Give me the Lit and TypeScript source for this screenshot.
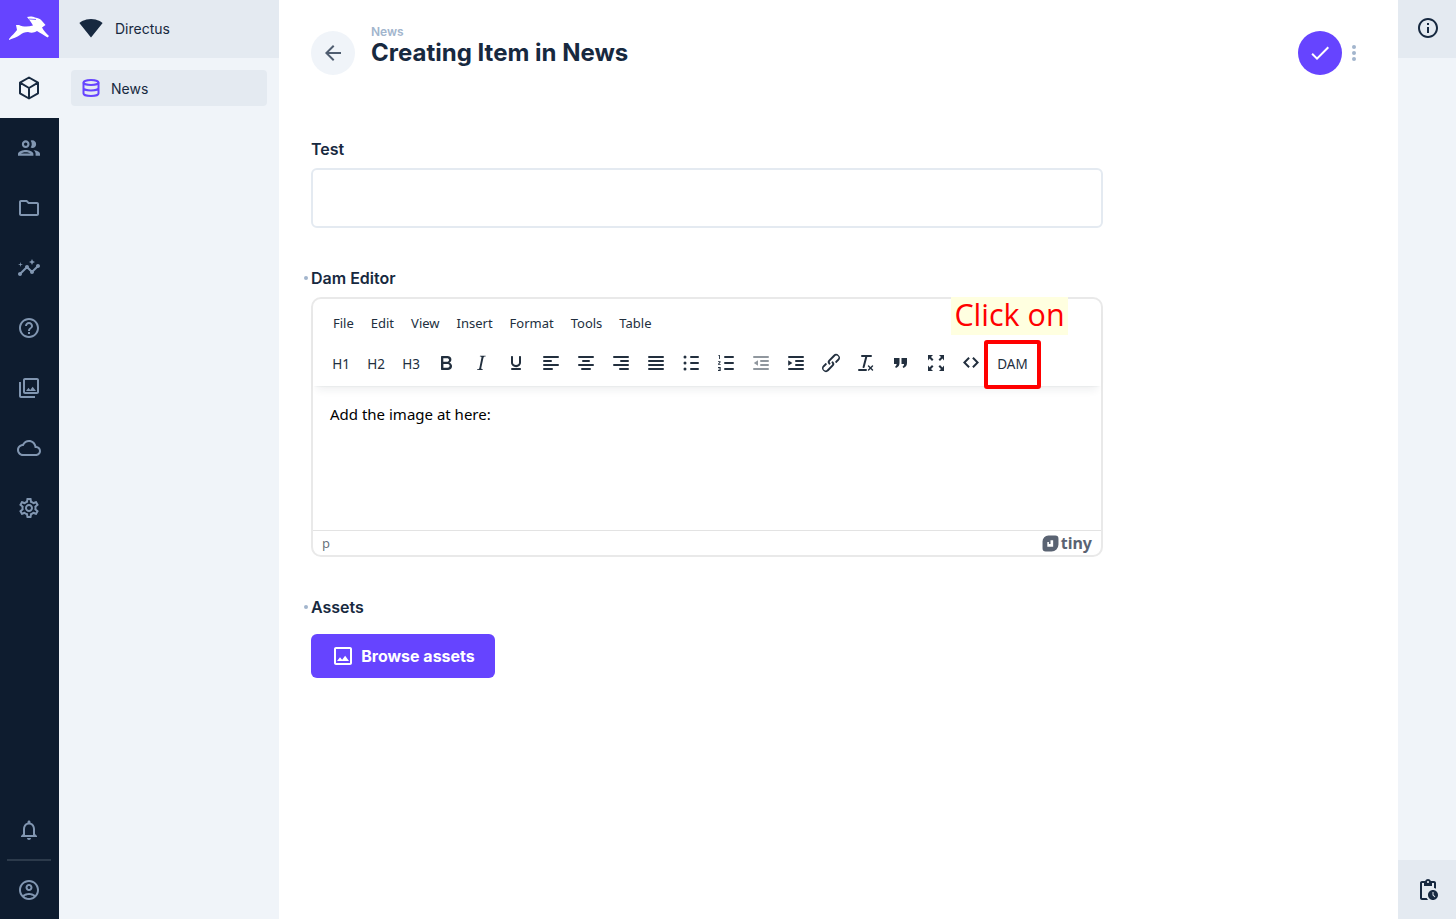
import { LitElement, html, css, svg, TemplateResult } from 'lit';
import { customElement } from 'lit/decorators.js';

const icon = (d: string, size = 24, cls = '') => html`<svg class=${cls} width=${size} height=${size} viewBox="0 0 24 24" fill="currentColor"><path d=${d}></path></svg>`;

const ICONS = {
  group: 'M9 13.75c-2.34 0-7 1.17-7 3.5V19h14v-1.75c0-2.33-4.66-3.5-7-3.5zM4.34 17c.84-.58 2.87-1.25 4.66-1.25s3.82.67 4.66 1.25H4.34zM9 12c1.93 0 3.5-1.57 3.5-3.5S10.93 5 9 5 5.5 6.57 5.5 8.5 7.07 12 9 12zm0-5c.83 0 1.5.67 1.5 1.5S9.83 10 9 10s-1.5-.67-1.5-1.5S8.17 7 9 7zm7.04 6.81c1.16.84 1.96 1.96 1.96 3.44V19h4v-1.75c0-2.02-3.5-3.17-5.96-3.44zM15 12c1.93 0 3.5-1.57 3.5-3.5S16.93 5 15 5c-.54 0-1.04.13-1.5.35.63.89 1 1.98 1 3.15s-.37 2.26-1 3.15c.46.22.96.35 1.5.35z',
  folder: 'M20 6h-8l-2-2H4c-1.1 0-1.99.9-1.99 2L2 18c0 1.1.9 2 2 2h16c1.1 0 2-.9 2-2V8c0-1.1-.9-2-2-2zm0 12H4V6h5.17l2 2H20v10z',
  insights: 'M21 8c-1.45 0-2.26 1.44-1.93 2.51l-3.55 3.56c-.3-.09-.74-.09-1.04 0l-2.55-2.55C12.27 10.45 11.46 9 10 9c-1.45 0-2.27 1.44-1.93 2.52l-4.56 4.55C2.44 15.74 1 16.55 1 18c0 1.1.9 2 2 2 1.45 0 2.26-1.44 1.93-2.51l4.55-4.56c.3.09.74.09 1.04 0l2.55 2.55C12.73 16.55 13.54 18 15 18c1.45 0 2.27-1.44 1.93-2.52l3.56-3.55c1.07.33 2.51-.48 2.51-1.93 0-1.1-.9-2-2-2zM15 9l.94-2.07L18 6l-2.06-.93L15 3l-.92 2.07L12 6l2.08.93zM3.5 11L4 9l2-.5L4 8l-.5-2L3 8l-2 .5L3 9z',
  help: 'M11 18h2v-2h-2v2zm1-16C6.48 2 2 6.48 2 12s4.48 10 10 10 10-4.48 10-10S17.52 2 12 2zm0 18c-4.41 0-8-3.59-8-8s3.59-8 8-8 8 3.59 8 8-3.59 8-8 8zm0-14c-2.21 0-4 1.79-4 4h2c0-1.1.9-2 2-2s2 .9 2 2c0 2-3 1.75-3 5h2c0-2.25 3-2.5 3-5 0-2.21-1.79-4-4-4z',
  photos: 'M20 4v12H8V4h12m0-2H8c-1.1 0-2 .9-2 2v12c0 1.1.9 2 2 2h12c1.1 0 2-.9 2-2V4c0-1.1-.9-2-2-2zm-8.5 9.67l1.69 2.26 2.48-3.1L19 15H9zM2 6v14c0 1.1.9 2 2 2h14v-2H4V6H2z',
  cloud: 'M19.35 10.04C18.67 6.59 15.64 4 12 4 9.11 4 6.6 5.64 5.35 8.04 2.34 8.36 0 10.91 0 14c0 3.31 2.69 6 6 6h13c2.76 0 5-2.24 5-5 0-2.64-2.05-4.78-4.65-4.96zM19 18H6c-2.21 0-4-1.79-4-4 0-2.05 1.53-3.76 3.56-3.97l1.07-.11.5-.95C8.08 7.14 9.94 6 12 6c2.62 0 4.88 1.86 5.39 4.43l.3 1.5 1.53.11c1.56.1 2.78 1.41 2.78 2.96 0 1.65-1.35 3-3 3z',
  settings: 'M19.43 12.98c.04-.32.07-.64.07-.98 0-.34-.03-.66-.07-.98l2.11-1.65c.19-.15.24-.42.12-.64l-2-3.46c-.09-.16-.26-.25-.44-.25-.06 0-.12.01-.17.03l-2.49 1c-.52-.4-1.08-.73-1.69-.98l-.38-2.65C14.46 2.18 14.25 2 14 2h-4c-.25 0-.46.18-.49.42l-.38 2.65c-.61.25-1.17.59-1.69.98l-2.49-1c-.06-.02-.12-.03-.18-.03-.17 0-.34.09-.43.25l-2 3.46c-.13.22-.07.49.12.64l2.11 1.65c-.04.32-.07.65-.07.98 0 .33.03.66.07.98l-2.11 1.65c-.19.15-.24.42-.12.64l2 3.46c.09.16.26.25.44.25.06 0 .12-.01.17-.03l2.49-1c.52.4 1.08.73 1.69.98l.38 2.65c.03.24.24.42.49.42h4c.25 0 .46-.18.49-.42l.38-2.65c.61-.25 1.17-.59 1.69-.98l2.49 1c.06.02.12.03.18.03.17 0 .34-.09.43-.25l2-3.46c.12-.22.07-.49-.12-.64l-2.11-1.65zm-1.98-1.71c.04.31.05.52.05.73 0 .21-.02.43-.05.73l-.14 1.13.89.7 1.08.84-.7 1.21-1.27-.51-1.04-.42-.9.68c-.43.32-.84.56-1.25.73l-1.06.43-.16 1.13-.2 1.35h-1.4l-.19-1.35-.16-1.13-1.06-.43c-.43-.18-.83-.41-1.23-.71l-.91-.7-1.06.43-1.27.51-.7-1.21 1.08-.84.89-.7-.14-1.13c-.03-.31-.05-.54-.05-.74s.02-.43.05-.73l.14-1.13-.89-.7-1.08-.84.7-1.21 1.27.51 1.04.42.9-.68c.43-.32.84-.56 1.25-.73l1.06-.43.16-1.13.2-1.35h1.39l.19 1.35.16 1.13 1.06.43c.43.18.83.41 1.23.71l.91.7 1.06-.43 1.27-.51.7 1.21-1.07.85-.89.7.14 1.13zM12 8c-2.21 0-4 1.79-4 4s1.79 4 4 4 4-1.79 4-4-1.79-4-4-4zm0 6c-1.1 0-2-.9-2-2s.9-2 2-2 2 .9 2 2-.9 2-2 2z',
  bell: 'M12 22c1.1 0 2-.9 2-2h-4c0 1.1.9 2 2 2zm6-6v-5c0-3.07-1.63-5.64-4.5-6.32V4c0-.83-.67-1.5-1.5-1.5s-1.5.67-1.5 1.5v.68C7.64 5.36 6 7.92 6 11v5l-2 2v1h16v-1l-2-2zm-2 1H8v-6c0-2.48 1.51-4.5 4-4.5s4 2.02 4 4.5v6z',
  account: 'M12 2C6.48 2 2 6.48 2 12s4.48 10 10 10 10-4.48 10-10S17.52 2 12 2zM7.35 18.5C8.66 17.56 10.26 17 12 17s3.34.56 4.65 1.5c-1.31.94-2.91 1.5-4.65 1.5s-3.34-.56-4.65-1.5zm10.79-1.38C16.45 15.8 14.32 15 12 15s-4.45.8-6.14 2.12C4.7 15.73 4 13.95 4 12c0-4.42 3.58-8 8-8s8 3.58 8 8c0 1.95-.7 3.73-1.86 5.12zM12 6c-1.93 0-3.5 1.57-3.5 3.5S10.07 13 12 13s3.5-1.57 3.5-3.5S13.93 6 12 6zm0 5c-.83 0-1.5-.67-1.5-1.5S11.17 8 12 8s1.5.67 1.5 1.5S12.83 11 12 11z',
  info: 'M11 7h2v2h-2zm0 4h2v6h-2zm1-9C6.48 2 2 6.48 2 12s4.48 10 10 10 10-4.48 10-10S17.52 2 12 2zm0 18c-4.41 0-8-3.59-8-8s3.59-8 8-8 8 3.59 8 8-3.59 8-8 8z',
  image: 'M19 5v14H5V5h14m0-2H5c-1.1 0-2 .9-2 2v14c0 1.1.9 2 2 2h14c1.1 0 2-.9 2-2V5c0-1.1-.9-2-2-2zm-4.86 8.86l-3 3.87L9 13.14 6 17h12l-3.86-5.14z',
  back: 'M20 11H7.83l5.59-5.59L12 4l-8 8 8 8 1.41-1.41L7.83 13H20v-2z',
  check: 'M9 16.17L4.83 12l-1.42 1.41L9 19 21 7l-1.41-1.41z',
  pending: 'M17 12c-2.76 0-5 2.24-5 5s2.24 5 5 5 5-2.24 5-5-2.24-5-5-5zm1.65 7.35L16.5 17.2V14h1v2.79l1.85 1.85-.7.71zM18 3h-3.18C14.4 1.84 13.3 1 12 1s-2.4.84-2.82 2H6c-1.1 0-2 .9-2 2v15c0 1.1.9 2 2 2h6.11c-.59-.57-1.07-1.25-1.42-2H6V5h2v3h8V5h2v5.08c.71.1 1.38.31 2 .6V5c0-1.1-.9-2-2-2zm-6 2c-.55 0-1-.45-1-1s.45-1 1-1 1 .45 1 1-.45 1-1 1z',
  wifi: 'M12.01 21.49L23.64 7c-.45-.34-4.93-4-11.64-4C5.28 3 .81 6.66.36 7l11.63 14.49.01.01.01-.01z',
};

// horizontal bars used by the tinymce align and list icons: [x1, x2, y]
const bars = (rows: number[][]) => svg`${rows.map(([a, b, y]) => svg`<rect x=${a} y=${y} width=${b - a} height="2" rx="1"></rect>`)}`;

const toolIcon = (inner: unknown, dim = false) => html`<button class="tool ${dim ? 'dim' : ''}"><svg width="24" height="24" viewBox="0 0 24 24" fill="currentColor">${inner}</svg></button>`;
const textTool = (t: string) => html`<button class="tool text">${t}</button>`;

@customElement('tiny-editor')
export class TinyEditor extends LitElement {
  static styles = css`
    :host {
      display: block;
      position: relative;
      height: 260px;
      box-sizing: border-box;
      border: 2px solid #e9e9e9;
      border-radius: 10px;
      font-family: 'Noto Sans', sans-serif;
      color: #222f3e;
      background: #fff;
    }
    .box {
      display: flex;
      flex-direction: column;
      height: 100%;
    }
    .header {
      padding: 4px 0 0 11px;
      height: 87px;
      box-sizing: border-box;
      box-shadow: 0 2px 2px -2px rgba(34, 47, 62, 0.1), 0 8px 8px -4px rgba(34, 47, 62, 0.07);
      position: relative;
    }
    .menubar {
      display: flex;
      height: 36px;
      align-items: center;
      margin-top: 2px;
      margin-left: 1px;
    }
    .menu {
      font-size: 13px;
      padding: 0 8px;
      margin-right: 1px;
      line-height: 34px;
    }
    .toolbar {
      display: flex;
      margin-top: 5px;
    }
    .tool {
      all: unset;
      width: 34px;
      height: 34px;
      margin-right: 1px;
      display: flex;
      align-items: center;
      justify-content: center;
      color: #222f3e;
      flex: none;
    }
    .tool.dim {
      color: rgba(34, 47, 62, 0.5);
    }
    .tool.text {
      font-size: 13.5px;
      padding-top: 1px;
      height: 33px;
    }
    .tool.dam {
      width: 47px;
    }
    .content {
      flex: 1;
      padding: 18px 17px;
      font-size: 15px;
      line-height: 20px;
      color: #000;
    }
    .status {
      height: 24px;
      border-top: 1px solid #e3e3e3;
      display: flex;
      align-items: center;
      justify-content: space-between;
      padding: 0 9px;
      font-size: 13px;
      color: rgba(34, 47, 62, 0.7);
    }
    .tiny {
      display: flex;
      align-items: center;
      gap: 2px;
      font-weight: 700;
      font-size: 16px;
      color: #5a6372;
    }
    .note {
      position: absolute;
      top: -2px;
      left: 638px;
      width: 117px;
      height: 38px;
      background: #ffffe0;
      color: #f00;
      font-family: 'Open Sans', sans-serif;
      font-size: 30.5px;
      line-height: 35px;
      text-align: center;
      white-space: nowrap;
    }
    .mark {
      position: absolute;
      top: 41px;
      left: 671px;
      width: 57px;
      height: 49px;
      box-sizing: border-box;
      border: 4px solid #f00;
      border-radius: 3px;
    }
  `;

  render(): TemplateResult {
    const menus = ['File', 'Edit', 'View', 'Insert', 'Format', 'Tools', 'Table'];
    return html`
      <div class="box">
        <div class="header">
          <div class="menubar">${menus.map(m => html`<span class="menu">${m}</span>`)}</div>
          <div class="toolbar">
            ${['H1', 'H2', 'H3'].map(textTool)}
            ${toolIcon(svg`<path d="M7.8 19c-.3 0-.5 0-.6-.2l-.2-.5V5.7c0-.2 0-.4.2-.5l.6-.2h5c1.5 0 2.7.3 3.5 1 .7.6 1.1 1.4 1.1 2.5a3 3 0 0 1-.6 1.9c-.4.6-1 1-1.6 1.2.4.1.9.3 1.3.6s.8.7 1 1.2c.4.4.5 1 .5 1.6 0 1.3-.4 2.3-1.3 3-.8.7-2.1 1-3.8 1H7.8zm5-8.3c.6 0 1.2-.1 1.6-.5.4-.3.6-.7.6-1.3 0-1.1-.8-1.7-2.3-1.7H9.3v3.5h3.4zm.5 6c.7 0 1.3-.1 1.7-.4.4-.4.6-.9.6-1.5s-.2-1-.7-1.4c-.4-.3-1-.4-2-.4H9.4v3.8h4z"></path>`)}
            ${toolIcon(svg`<path d="M16.7 4.7l-.1.9h-.3c-.6 0-1 0-1.4.3-.3.3-.4.6-.5 1.1l-2.1 9.8v.6c0 .5.4.8 1.4.8h.2l-.2.8H8l.2-.8h.2c1.1 0 1.8-.5 2-1.5l2-9.8.1-.5c0-.6-.4-.8-1.4-.8h-.3l.2-.9h5.8z"></path>`)}
            ${toolIcon(svg`<path d="M16 5c.6 0 1 .4 1 1v5.5a4 4 0 0 1-.4 1.8l-1 1.4a5.3 5.3 0 0 1-5.5 1 5 5 0 0 1-1.6-1c-.5-.4-.8-.9-1.1-1.4a4 4 0 0 1-.4-1.8V6c0-.6.4-1 1-1s1 .4 1 1v5.5c0 .3 0 .6.2 1l.6.7a3.3 3.3 0 0 0 2.2.8 3.4 3.4 0 0 0 2.2-.8c.3-.2.4-.5.6-.8l.2-.9V6c0-.6.4-1 1-1zM8 17h8c.6 0 1 .4 1 1s-.4 1-1 1H8a1 1 0 0 1 0-2z"></path>`)}
            ${toolIcon(bars([[4, 20, 5], [4, 13, 9], [4, 20, 13], [4, 14, 17]]))}
            ${toolIcon(bars([[4, 20, 5], [8, 16, 9], [4, 20, 13], [7, 17, 17]]))}
            ${toolIcon(bars([[4, 20, 5], [11, 20, 9], [4, 20, 13], [10, 20, 17]]))}
            ${toolIcon(bars([[4, 20, 5], [4, 20, 9], [4, 20, 13], [4, 20, 17]]))}
            ${toolIcon(svg`${bars([[11, 20, 5], [11, 20, 11], [11, 20, 17]])}<circle cx="6" cy="6" r="1.5"></circle><circle cx="6" cy="12" r="1.5"></circle><circle cx="6" cy="18" r="1.5"></circle>`)}
            ${toolIcon(svg`${bars([[10, 20, 5], [10, 20, 11], [10, 20, 17]])}<path d="M4.5 4h1.4v4H5V5h-.5zM4 10.2h2.6v1L5.2 12.9h1.5v.9H4v-.9l1.5-1.8H4zM4 16h2.7v3.9H4V19h1.8v-.6H4.6v-.8h1.2V17H4z"></path>`)}
            ${toolIcon(svg`${bars([[4, 20, 5], [11, 20, 9], [11, 20, 13], [4, 20, 17]])}<path d="M9 9.2v5.6L4.8 12z"></path>`, true)}
            ${toolIcon(svg`${bars([[4, 20, 5], [11, 20, 9], [11, 20, 13], [4, 20, 17]])}<path d="M4.2 9.2v5.6L8.4 12z"></path>`)}
            ${toolIcon(svg`<path d="M6.2 12.3a1 1 0 0 1 1.4 1.4l-2 2a2 2 0 1 0 2.6 2.8l4.8-4.8a1 1 0 0 0 0-1.4 1 1 0 1 1 1.4-1.3 2.9 2.9 0 0 1 0 4L9.6 20a3.9 3.9 0 0 1-5.5-5.5l2-2zm11.6-.6a1 1 0 0 1-1.4-1.4l2-2a2 2 0 1 0-2.6-2.8L11 10.3a1 1 0 0 0 0 1.4 1 1 0 1 1-1.4 1.3 2.9 2.9 0 0 1 0-4L14.4 4a3.9 3.9 0 0 1 5.5 5.5l-2 2z"></path>`)}
            ${toolIcon(svg`<path d="M13.2 6a1 1 0 0 1 0 .2l-2.6 10a1 1 0 0 1-1 .8h-.2a.8.8 0 0 1-.8-1l2.6-10H8a1 1 0 1 1 0-2h9a1 1 0 0 1 0 2h-3.800zM5 18h7a1 1 0 0 1 0 2H5a1 1 0 0 1 0-2zm13 1.500L16.500 18 15 19.500a.7.7 0 0 1-1-1l1.500-1.500-1.500-1.500a.7.7 0 0 1 1-1l1.500 1.500 1.500-1.500a.7.7 0 0 1 1 1L17.500 17l1.500 1.500a.7.7 0 0 1-1 1z"></path>`)}
            ${toolIcon(svg`<path d="M5 7h5.500v5c0 2-1 4-3.500 5l-1-1.300c1-.6 1.600-1.500 1.600-2.700H5zM12.500 7H18v5c0 2-1 4-3.500 5l-1-1.300c1-.6 1.600-1.500 1.600-2.700h-2.600z"></path>`)}
            ${toolIcon(svg`<path d="M4 4h5L7 6l2.500 2.500L8 10 5.600 7.600 4 9.500zM20 4v5.500l-1.600-1.900L16 10l-1.500-1.500L17 6l-2-2zM4 20v-5.500l1.600 1.900L8 14l1.500 1.500L7 18l2 2zM20 20h-5l2-2-2.500-2.500L16 14l2.400 2.400 1.600-1.900z"></path>`)}
            ${toolIcon(svg`<path d="M9.400 6.600L10.800 8l-4 4 4 4-1.400 1.400L4 12zM14.600 6.600L13.200 8l4 4-4 4 1.400 1.400L20 12z" transform="translate(0 -.5)"></path>`)}
            <button class="tool text dam">DAM</button>
          </div>
        </div>
        <div class="content">Add the image at here:</div>
        <div class="status">
          <span>p</span>
          <span class="tiny">
            <svg width="17" height="17" viewBox="0 0 16 16"><path fill="#5a6372" fill-rule="evenodd" d="M6 .5h6.500a3 3 0 0 1 3 3V9a6.500 6.500 0 0 1-6.500 6.500H3.500a3 3 0 0 1-3-3V6A5.500 5.500 0 0 1 6 .5zM5 6.500v4.500h5.500V5H8v3.500H6.500V6.500z"></path></svg>
            tiny
          </span>
        </div>
      </div>
      <div class="note">Click on</div>
      <div class="mark"></div>
    `;
  }
}

@customElement('app-root')
export class AppRoot extends LitElement {
  static styles = css`
    :host {
      display: grid;
      grid-template-columns: 59px 220px 1fr 58px;
      height: 919px;
      overflow: hidden;
      font-family: Inter, sans-serif;
      color: #172940;
      background: #fff;
    }
    .modules {
      background: #0e1c2f;
      display: flex;
      flex-direction: column;
      color: #8196b1;
    }
    .logo {
      height: 58px;
      background: #6644ff;
    }
    .mod {
      height: 60px;
      padding-right: 2px;
      display: flex;
      align-items: center;
      justify-content: center;
    }
    .mod.active {
      background: #f0f4f9;
      color: #172940;
    }
    .mod.last {
      height: 58px;
    }
    .mod .big {
      transform: scale(1.1);
    }
    .spacer {
      flex: 1;
    }
    .divider {
      height: 2px;
      margin: -1px 8px 0 7px;
      background: #2c3a4b;
    }
    .nav {
      background: #f0f4f9;
    }
    .project {
      height: 56px;
      padding-bottom: 2px;
      background: #e4eaf1;
      display: flex;
      align-items: center;
      gap: 12px;
      padding-left: 20px;
      font-size: 14px;
    }
    .item {
      margin: 12px 12px 0;
      height: 36px;
      border-radius: 4px;
      background: #e4eaf1;
      display: flex;
      align-items: center;
      gap: 10px;
      padding-left: 10px;
      font-size: 14px;
    }
    .item svg {
      color: #6644ff;
    }
    main {
      padding: 31px 0 0 32px;
      min-width: 0;
    }
    .head {
      display: flex;
      align-items: center;
      height: 44px;
      padding-right: 42px;
    }
    .round {
      width: 44px;
      height: 44px;
      border-radius: 50%;
      display: flex;
      align-items: center;
      justify-content: center;
      flex: none;
    }
    .round.back {
      background: #f0f4f9;
      color: #4f5d70;
    }
    .round.save {
      background: #6644ff;
      color: #fff;
    }
    .titles {
      margin: -8px 0 0 16px;
      flex: 1;
    }
    .crumb {
      font-size: 12px;
      font-weight: 600;
      line-height: 14px;
      color: #a2b5cd;
      margin-top: -6px;
    }
    h1 {
      margin: -1px 0 0;
      font-size: 24px;
      font-weight: 700;
      line-height: 29px;
    }
    .dots {
      display: flex;
      flex-direction: column;
      gap: 2px;
      margin-left: 10px;
      width: 4px;
    }
    .dots i {
      width: 4px;
      height: 4px;
      border-radius: 50%;
      background: #a2b5cd;
    }
    form {
      width: 792px;
      margin-top: 65px;
      display: flex;
      flex-direction: column;
    }
    .field + .field {
      margin-top: 41px;
    }
    label {
      display: block;
      position: relative;
      font-size: 16px;
      font-weight: 600;
      line-height: 19px;
      margin-bottom: 9px;
    }
    label.req::before {
      content: '';
      position: absolute;
      left: -7px;
      top: 7px;
      width: 4px;
      height: 4px;
      border-radius: 50%;
      background: #a2b5cd;
    }
    .input {
      height: 60px;
      box-sizing: border-box;
      border: 2px solid #e4eaf1;
      border-radius: 6px;
    }
    .browse {
      all: unset;
      display: inline-flex;
      align-items: center;
      justify-content: center;
      gap: 6px;
      box-sizing: border-box;
      width: 184px;
      height: 44px;
      margin-top: 8px;
      border-radius: 6px;
      background: #6644ff;
      color: #fff;
      font-size: 16px;
      font-weight: 700;
    }
    .side {
      background: #f0f4f9;
      display: flex;
      flex-direction: column;
      justify-content: space-between;
    }
    .side div {
      background: #e4eaf1;
      height: 58px;
      padding-left: 2px;
      display: flex;
      align-items: center;
      justify-content: center;
    }
    .side .top {
      padding-bottom: 2px;
      height: 56px;
    }
    .side .bottom {
      height: 59px;
    }
  `;

  render(): TemplateResult {
    const mods = [ICONS.folder, ICONS.insights, ICONS.help, ICONS.photos, ICONS.cloud, ICONS.settings];
    return html`
      <div class="modules">
        <div class="logo">
          <svg width="59" height="58" viewBox="0 0 59 58">
            <path fill="#fff" d="M9 39C12 35 15 33 17 30L16 25L19 25C23 27 28 27 33 25.5C31 22 29 19 27 17C30 16 33 16.500 35 17.500C38 18 41 19 42 21L45.500 25L42 27.500C44 31 46 33 49 36L47.500 37.500C44 35 40 33 37 31C34 33 31 33 28 32C25 32 22 33 20 35C17 37 13 38.500 9 40Z"></path>
            <path fill="none" stroke="#6644ff" stroke-width=".8" d="M29 19L36 19.500"></path>
          </svg>
        </div>
        <div class="mod active">
          <svg width="24" height="24" viewBox="0 0 24 24" fill="none" stroke="currentColor" stroke-width="2" stroke-linejoin="round"><path d="M12 1.500l9 5.200v10.600l-9 5.200-9-5.200V6.700zM3 6.700L12 12l9-5.300M12 12v10.500"></path></svg>
        </div>
        <div class="mod">${icon(ICONS.group, 24, 'big')}</div>
        ${mods.map(d => html`<div class="mod">${icon(d)}</div>`)}
        <div class="spacer"></div>
        <div class="mod">${icon(ICONS.bell)}</div>
        <div class="divider"></div>
        <div class="mod last">${icon(ICONS.account)}</div>
      </div>

      <div class="nav">
        <div class="project">${icon(ICONS.wifi)}<span>Directus</span></div>
        <div class="item">
          <svg width="20" height="20" viewBox="0 0 20 20" fill="none" stroke="currentColor" stroke-width="2"><ellipse cx="10" cy="4.500" rx="7.500" ry="2.500"></ellipse><path d="M2.500 4.500v11c0 1.400 3.400 2.500 7.500 2.500s7.500-1.100 7.500-2.500v-11M2.500 10c0 1.400 3.400 2.500 7.500 2.500s7.500-1.100 7.500-2.500"></path></svg>
          <span>News</span>
        </div>
      </div>

      <main>
        <div class="head">
          <div class="round back">${icon(ICONS.back)}</div>
          <div class="titles">
            <div class="crumb">News</div>
            <h1>Creating Item in News</h1>
          </div>
          <div class="round save">${icon(ICONS.check)}</div>
          <div class="dots"><i></i><i></i><i></i></div>
        </div>
        <form>
          <div class="field">
            <label>Test</label>
            <div class="input"></div>
          </div>
          <div class="field">
            <label class="req">Dam Editor</label>
            <tiny-editor></tiny-editor>
          </div>
          <div class="field">
            <label class="req">Assets</label>
            <button class="browse" type="button">${icon(ICONS.image)}Browse assets</button>
          </div>
        </form>
      </main>

      <div class="side">
        <div class="top">${icon(ICONS.info)}</div>
        <div class="bottom">${icon(ICONS.pending)}</div>
      </div>
    `;
  }
}
